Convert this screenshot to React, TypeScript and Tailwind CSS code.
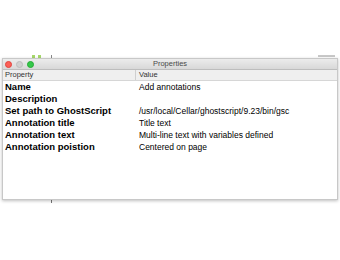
import React from "react";

const rows: [string, string][] = [
  ["Name", "Add annotations"],
  ["Description", ""],
  ["Set path to GhostScript", "/usr/local/Cellar/ghostscript/9.23/bin/gsc"],
  ["Annotation title", "Title text"],
  ["Annotation text", "Multi-line text with variables defined"],
  ["Annotation poistion", "Centered on page"],
];

export default function App() {
  return (
    <div
      className="relative w-[340px] h-[260px] bg-white overflow-hidden"
      style={{ fontFamily: '"Liberation Sans", Arial, sans-serif' }}
    >
      {/* background remnants */}
      <div className="absolute left-[32px] top-[55px] w-[3px] h-[3px] bg-[#a6d86a]" />
      <div className="absolute left-[38px] top-[55px] w-[3px] h-[3px] bg-[#a6d86a]" />
      <div className="absolute left-[51px] top-[55px] w-[1px] h-[3px] bg-[#888]" />
      <div className="absolute left-[318px] top-[55px] w-[17px] h-[2px] bg-[#c8c8c8]" />
      <div className="absolute left-[51px] top-[200px] w-[1px] h-[3px] bg-[#777]" />

      <div className="absolute left-[2px] top-[58px] w-[336px] h-[142px] bg-white border border-[#c8c8c8] shadow-[0_1px_3px_rgba(0,0,0,0.25)] flex flex-col">
        <div className="relative h-[11px] bg-gradient-to-b from-[#ececec] to-[#d8d8d8] border-b border-[#bdbdbd] flex items-center">
          <div className="flex gap-[4px] pl-[2px]">
            <div className="w-[7px] h-[7px] rounded-full bg-[#fc5f57] border border-[#e0443e]" />
            <div className="w-[7px] h-[7px] rounded-full bg-[#d0d0d0] border border-[#bcbcbc]" />
            <div className="w-[7px] h-[7px] rounded-full bg-[#34c84a] border border-[#27aa35]" />
          </div>
          <div className="absolute inset-0 flex items-center justify-center text-[7.5px] text-[#4a4a4a]">
            Properties
          </div>
        </div>
        <div className="h-[11px] bg-[#efefef] border-b border-[#d6d6d6] flex items-center text-[7.5px] text-[#333]">
          <div className="w-[133px] pl-[2px] border-r border-[#cfcfcf] h-full flex items-center">Property</div>
          <div className="pl-[3px]">Value</div>
        </div>
        <div className="flex flex-col">
          {rows.map(([k, v]) => (
            <div key={k} className="h-[12px] flex items-center text-black">
              <div className="w-[134px] pl-[2px] font-bold text-[9.5px]">{k}</div>
              <div className="pl-[2px] text-[8.5px]">{v}</div>
            </div>
          ))}
        </div>
      </div>
    </div>
  );
}
